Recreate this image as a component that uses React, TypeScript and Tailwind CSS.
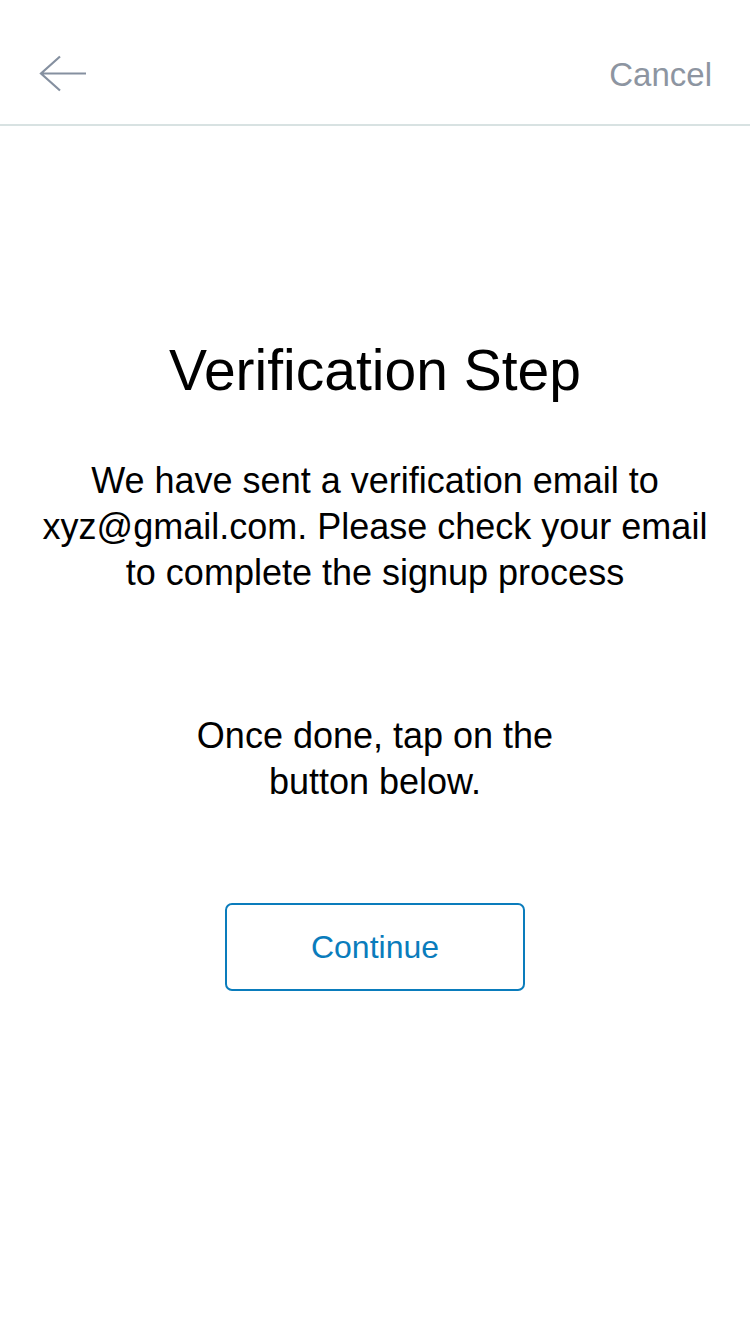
export default function App() {
  return (
    <div
      className="min-h-screen w-full bg-white text-black"
      style={{ fontFamily: '"Liberation Sans", Arial, sans-serif' }}
    >
      <header className="flex h-[126px] items-center justify-between border-b-2 border-[#d8e2e2] pl-[39px] pr-[38px] pt-[24px]">
        <button aria-label="Back" className="flex h-[40px] w-[50px] items-center">
          <svg width="50" height="40" viewBox="0 0 50 40" fill="none">
            <path
              d="M21 2.5 L2 19.5 L21 36.5 M2 19.5 H47"
              stroke="#8590a0"
              strokeWidth="2.2"
              strokeLinejoin="miter"
            />
          </svg>
        </button>
        <button className="text-[33px] leading-none text-[#8d95a1]">Cancel</button>
      </header>

      <main className="flex flex-col items-center px-6 pt-[216px] text-center">
        <h1 className="text-[57px] font-light leading-none">Verification Step</h1>

        <p className="mt-[59px] text-[36px] leading-[46px]">
          We have sent a verification email to
          <br />
          xyz@gmail.com. Please check your email
          <br />
          to complete the signup process
        </p>

        <p className="mt-[117px] text-[36px] leading-[46px]">
          Once done, tap on the
          <br />
          button below.
        </p>

        <button className="mt-[98px] flex h-[88px] w-[300px] items-center justify-center rounded-[7px] border-2 border-[#0a7cbc] text-[32px] text-[#0a7cbc]">
          Continue
        </button>
      </main>
    </div>
  );
}
